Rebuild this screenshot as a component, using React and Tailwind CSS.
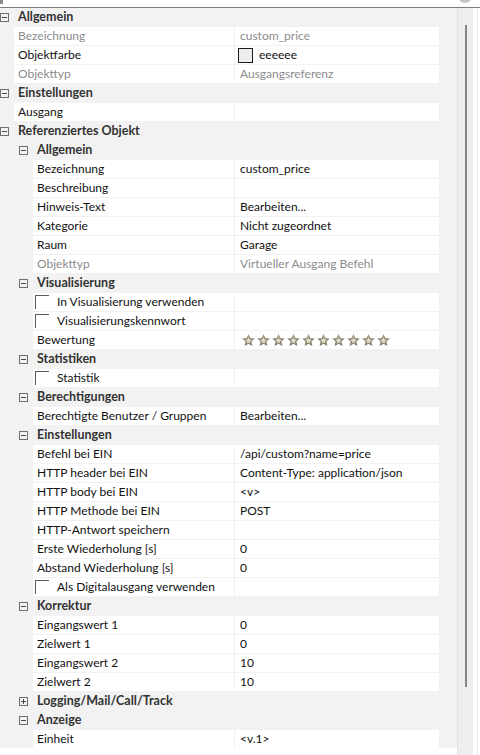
import React from 'react';

const FONT = { fontFamily: 'Lato, "Noto Sans", "Liberation Sans", sans-serif' };

const rows = [
  { cat: true, level: 0, label: 'Allgemein' },
  { level: 0, label: 'Bezeichnung', value: 'custom_price', dim: true },
  { level: 0, label: 'Objektfarbe', swatch: 'eeeeee' },
  { level: 0, label: 'Objekttyp', value: 'Ausgangsreferenz', dim: true },
  { cat: true, level: 0, label: 'Einstellungen' },
  { level: 0, label: 'Ausgang' },
  { cat: true, level: 0, label: 'Referenziertes Objekt' },
  { cat: true, level: 1, label: 'Allgemein' },
  { level: 1, label: 'Bezeichnung', value: 'custom_price' },
  { level: 1, label: 'Beschreibung' },
  { level: 1, label: 'Hinweis-Text', value: 'Bearbeiten...' },
  { level: 1, label: 'Kategorie', value: 'Nicht zugeordnet' },
  { level: 1, label: 'Raum', value: 'Garage' },
  { level: 1, label: 'Objekttyp', value: 'Virtueller Ausgang Befehl', dim: true },
  { cat: true, level: 1, label: 'Visualisierung' },
  { level: 1, label: 'In Visualisierung verwenden', check: true },
  { level: 1, label: 'Visualisierungskennwort', check: true },
  { level: 1, label: 'Bewertung', stars: true },
  { cat: true, level: 1, label: 'Statistiken' },
  { level: 1, label: 'Statistik', check: true },
  { cat: true, level: 1, label: 'Berechtigungen' },
  { level: 1, label: 'Berechtigte Benutzer / Gruppen', value: 'Bearbeiten...' },
  { cat: true, level: 1, label: 'Einstellungen' },
  { level: 1, label: 'Befehl bei EIN', value: '/api/custom?name=price' },
  { level: 1, label: 'HTTP header bei EIN', value: 'Content-Type: application/json' },
  { level: 1, label: 'HTTP body bei EIN', value: '<v>' },
  { level: 1, label: 'HTTP Methode bei EIN', value: 'POST' },
  { level: 1, label: 'HTTP-Antwort speichern' },
  { level: 1, label: 'Erste Wiederholung [s]', value: '0' },
  { level: 1, label: 'Abstand Wiederholung [s]', value: '0' },
  { level: 1, label: 'Als Digitalausgang verwenden', check: true },
  { cat: true, level: 1, label: 'Korrektur' },
  { level: 1, label: 'Eingangswert 1', value: '0' },
  { level: 1, label: 'Zielwert 1', value: '0' },
  { level: 1, label: 'Eingangswert 2', value: '10' },
  { level: 1, label: 'Zielwert 2', value: '10' },
  { cat: true, level: 1, label: 'Logging/Mail/Call/Track', collapsed: true },
  { cat: true, level: 1, label: 'Anzeige' },
  { level: 1, label: 'Einheit', value: '<v.1>' },
];

// 5-point star, outer radius r, inner radius ri
function starPoints(cx, cy, r, ri) {
  const pts = [];
  for (let i = 0; i < 10; i++) {
    const rad = i % 2 === 0 ? r : ri;
    const a = -Math.PI / 2 + (i * Math.PI) / 5;
    pts.push(`${(cx + rad * Math.cos(a)).toFixed(2)},${(cy + rad * Math.sin(a)).toFixed(2)}`);
  }
  return pts.join(' ');
}

const OUTER = starPoints(6.5, 6.6, 6.6, 3.1);
const INNER = starPoints(6.5, 6.9, 3.4, 1.6);

function ToggleBox({ collapsed }) {
  return (
    <div className="relative w-[9px] h-[9px] border border-[#6f6f6f] shrink-0">
      <div className="absolute left-[1px] top-[3px] w-[5px] h-px bg-[#4a4a4a]" />
      {collapsed && <div className="absolute left-[3px] top-[1px] w-px h-[5px] bg-[#4a4a4a]" />}
    </div>
  );
}

function Star() {
  return (
    <svg width="13" height="12" viewBox="0 0 13 12">
      <defs>
        <linearGradient id="sg" x1="0" y1="0" x2="0" y2="1">
          <stop offset="0" stopColor="#a39d86" />
          <stop offset="1" stopColor="#7b7561" />
        </linearGradient>
        <linearGradient id="sgi" x1="0" y1="0" x2="0" y2="1">
          <stop offset="0" stopColor="#f4f1e6" />
          <stop offset="1" stopColor="#cfc9b3" />
        </linearGradient>
      </defs>
      <polygon points={OUTER} fill="url(#sg)" />
      <polygon points={INNER} fill="url(#sgi)" />
    </svg>
  );
}

function CategoryRow({ row }) {
  return (
    <div className={`h-[19px] flex items-start ${row.level === 0 ? 'pl-0' : 'pl-[19px]'}`}>
      <div className="h-[18px] flex items-center">
        <ToggleBox collapsed={row.collapsed} />
        <span className="ml-[9px] text-[12.5px] font-bold text-[#333333] leading-[18px]">{row.label}</span>
      </div>
    </div>
  );
}

function PropRow({ row }) {
  const lvl0 = row.level === 0;
  return (
    <div className="h-[19px] flex items-start">
      <div className={lvl0 ? 'w-[14px] shrink-0' : 'w-[33px] shrink-0'} />
      <div className="flex-1 h-[18px] bg-white flex leading-[18px]">
        <div className={`${lvl0 ? 'w-[220px]' : 'w-[201px]'} shrink-0 flex items-center whitespace-nowrap overflow-hidden`}>
          {row.check ? (
            <>
              <div className="ml-[2px] w-[14px] h-[14px] border-t border-l border-[#5a5a5a] shrink-0" />
              <span className="ml-[8px] text-[#111111]">{row.label}</span>
            </>
          ) : (
            <span className={`pl-[4px] ${row.dim ? 'text-[#8c8c8c]' : 'text-[#111111]'}`}>{row.label}</span>
          )}
        </div>
        <div className="flex-1 border-l border-[#f0f0f0] flex items-center pl-[5px] whitespace-nowrap overflow-hidden">
          {row.swatch && (
            <>
              <div className="-ml-[2px] w-[15px] h-[15px] border border-[#1a1a1a] bg-[#eeeeee] shrink-0" />
              <span className="ml-[6px] text-[#111111]">{row.swatch}</span>
            </>
          )}
          {row.stars && (
            <div className="flex gap-[2px] ml-[2px]">
              {Array.from({ length: 10 }).map((_, i) => (
                <Star key={i} />
              ))}
            </div>
          )}
          {row.value && (
            <span className={row.dim ? 'text-[#8c8c8c]' : 'text-[#111111]'}>{row.value}</span>
          )}
        </div>
      </div>
    </div>
  );
}

export default function App() {
  return (
    <div className="relative w-[480px] h-[755px] bg-white overflow-hidden text-[12px]" style={FONT}>
      {/* cut off bits at the top edge */}
      <div className="absolute left-0 top-0 w-[3px] h-[4px] bg-[#8a8a8a]" />
      <div className="absolute left-[458px] -top-[11px] w-[14px] h-[14px] rounded-full bg-[#c6c6c6]" />

      <div className="h-[7px]" />
      <div className="h-px bg-[#7d7d7d]" />

      <div className="flex h-[747px]">
        <div className="w-[457px] flex flex-col">
          <div className="h-[740px] bg-[#f2f2f2] pr-[18px] overflow-hidden">
            {rows.map((row, i) =>
              row.cat ? <CategoryRow key={i} row={row} /> : <PropRow key={i} row={row} />
            )}
          </div>
          <div className="flex-1 bg-white" />
        </div>

        {/* scrollbar */}
        <div className="w-[16px] bg-[#eeeeee] border-l border-[#e2e2e2] pt-[17px]">
          <div className="ml-[7px] w-[2px] h-[662px] bg-[#858585]" />
        </div>
        <div className="flex-1 bg-white flex justify-end pr-[2px]">
          <div className="w-px bg-[#ececec]" />
        </div>
      </div>
    </div>
  );
}
